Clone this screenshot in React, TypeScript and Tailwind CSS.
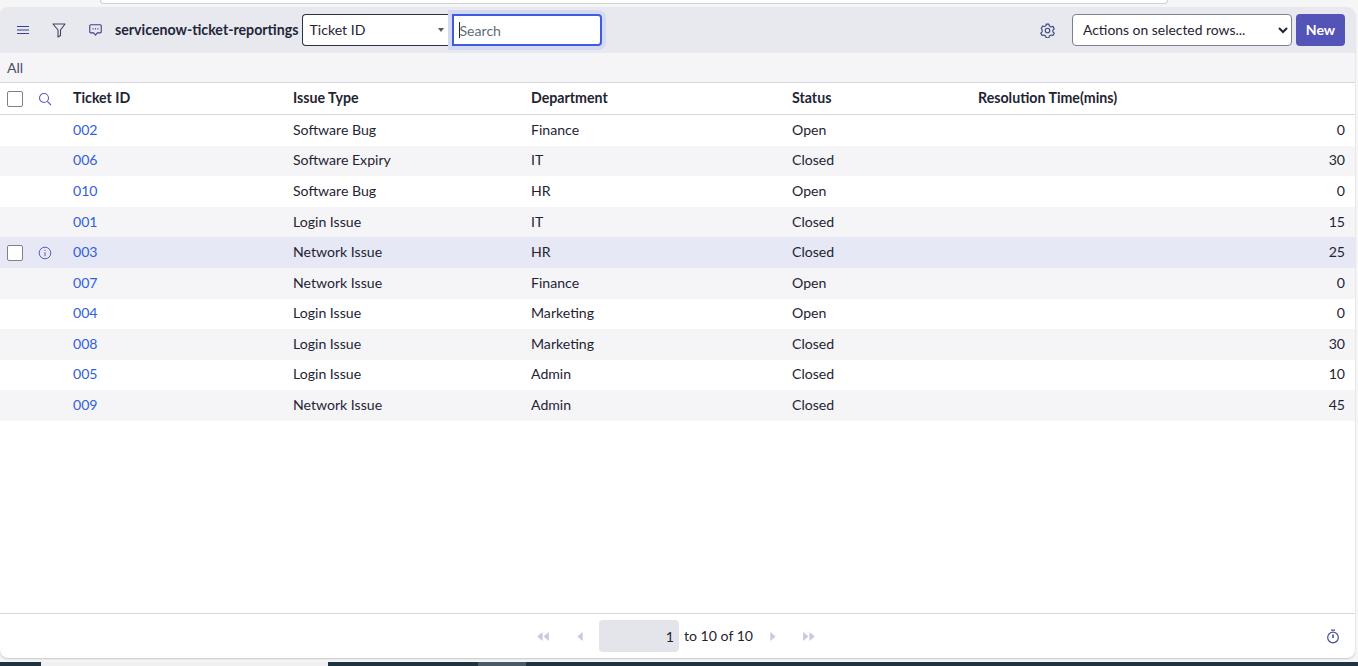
import React from "react";

const rows = [
  ["002", "Software Bug", "Finance", "Open", "0"],
  ["006", "Software Expiry", "IT", "Closed", "30"],
  ["010", "Software Bug", "HR", "Open", "0"],
  ["001", "Login Issue", "IT", "Closed", "15"],
  ["003", "Network Issue", "HR", "Closed", "25"],
  ["007", "Network Issue", "Finance", "Open", "0"],
  ["004", "Login Issue", "Marketing", "Open", "0"],
  ["008", "Login Issue", "Marketing", "Closed", "30"],
  ["005", "Login Issue", "Admin", "Closed", "10"],
  ["009", "Network Issue", "Admin", "Closed", "45"],
];

const MenuIcon = () => (
  <svg width="12" height="10" viewBox="0 0 12 10" fill="none" stroke="#3b3f8f" strokeWidth="1.1">
    <path d="M0 1.500h12M0 5h12M0 8.500h12" />
  </svg>
);

const FilterIcon = () => (
  <svg width="14" height="15" viewBox="0 0 14 15" fill="none" stroke="#3f4560" strokeWidth="1.1" strokeLinejoin="round">
    <path d="M1 1h12L8.500 7v5.500L6 14V7z" />
  </svg>
);

const ChatIcon = () => (
  <svg width="13" height="12" viewBox="0 0 14 13" fill="none" stroke="#3b3f8f" strokeWidth="1.200" strokeLinejoin="round">
    <path d="M2 .8h10a1.200 1.200 0 0 1 1.200 1.200v6.400A1.200 1.200 0 0 1 12 9.600H9l-2 2.500-2-2.500H2A1.200 1.200 0 0 1 .8 8.400V2A1.200 1.200 0 0 1 2 .8z" />
    <path d="M3.800 5.200h1.200M6.400 5.200h1.200M9 5.200h1.200" strokeWidth="1.400" />
  </svg>
);

const GearIcon = () => (
  <svg width="15" height="15" viewBox="0 0 16 16" fill="none" stroke="#3f4580" strokeWidth="1.200" strokeLinejoin="round">
    <path d="M6.500 1.200h3l.5 2 1.800 1 2-.6 1.400 2.600-1.500 1.400v1.800l1.500 1.400-1.400 2.600-2-.6-1.800 1-.5 2h-3l-.5-2-1.800-1-2 .6-1.400-2.600 1.500-1.400V7.200L1.300 5.800l1.400-2.600 2 .6 1.800-1z" />
    <circle cx="8" cy="8" r="2.400" />
  </svg>
);

const SearchIcon = () => (
  <svg width="14" height="14" viewBox="0 0 14 14" fill="none" stroke="#5a5fc0" strokeWidth="1.1">
    <circle cx="6" cy="6" r="4.500" />
    <path d="M9.300 9.300L13 13" />
  </svg>
);

const InfoIcon = () => (
  <svg width="14" height="14" viewBox="0 0 14 14" fill="none" stroke="#5a5fc0" strokeWidth="1">
    <circle cx="7" cy="7" r="5.800" />
    <path d="M7 6.200v4M7 3.800v1.100" />
  </svg>
);

const StopwatchIcon = () => (
  <svg width="14" height="15" viewBox="0 0 14 15" fill="none" stroke="#4a4f9c" strokeWidth="1.200">
    <circle cx="7" cy="8.500" r="5.300" />
    <path d="M5 1.200h4" />
    <path d="M7 5.500v3.500" strokeWidth="1.600" />
  </svg>
);

const DoubleArrow = ({ left }: { left?: boolean }) => (
  <svg width="12" height="9" viewBox="0 0 13 10" fill="#c9c9e0">
    {left ? <path d="M6 0v10L0 5zM13 0v10L7 5z" /> : <path d="M0 0v10l6-5zM7 0v10l6-5z" />}
  </svg>
);

const SingleArrow = ({ left }: { left?: boolean }) => (
  <svg width="6" height="9" viewBox="0 0 6 10" fill="#c9c9e0">
    {left ? <path d="M6 0v10L0 5z" /> : <path d="M0 0v10l6-5z" />}
  </svg>
);

const Checkbox = () => (
  <span className="block w-4 h-4 rounded-[2px] border border-[#7d8090] bg-white" />
);

const columns = "grid grid-cols-[30px_43px_220px_238px_261px_186px_1fr] items-center pr-[10px]";

export default function App() {
  return (
    <div className="h-[666px] w-[1358px] overflow-hidden flex flex-col bg-[#f6f6f6] text-[14.1px] text-[#1f2433] font-['Lato','Noto_Sans',sans-serif]">
      <div className="h-[7px] shrink-0 pl-[100px] pr-[190px]">
        <div className="h-[4px] bg-white border-b border-x border-[#d0d0d0] rounded-b-[8px]" />
      </div>

      <div className="flex-1 min-h-0 mr-[3px] bg-white rounded-[8px] flex flex-col overflow-hidden shadow-[0_1px_2px_rgba(0,0,0,0.2)]">
        <div className="h-[46px] shrink-0 bg-[#e8e9ee] flex items-center">
          <div className="w-[46px] flex justify-center"><MenuIcon /></div>
          <div className="w-[26px] flex justify-center"><FilterIcon /></div>
          <div className="w-[36px] pl-[10px] flex justify-center"><ChatIcon /></div>
          <span className="ml-[7px] pb-[1px] font-bold text-[14.2px] text-[#22263a] whitespace-nowrap">servicenow-ticket-reportings</span>
          <div className="ml-[4px] h-[32px] w-[150px] bg-white border border-[#2e3140] border-r-0 rounded-l-[4px] flex items-center justify-between pl-[6px] pr-[8px]">
            <span className="pb-[1px]">Ticket ID</span>
            <span className="w-0 h-0 border-x-[3px] border-x-transparent border-t-[4px] border-t-[#555a6a]" />
          </div>
          <div className="relative h-[32px] w-[150px] bg-white border-2 border-[#3f5ce0] rounded-r-[4px] flex items-center pl-[5px] text-[#5f6b7a] shadow-[0_0_0_4px_#d5daf2]">
            <span className="w-px h-[16px] -mr-px bg-[#1f2433]" />
            <span className="pt-[1px]">Search</span>
          </div>
          <div className="ml-auto flex items-center">
            <GearIcon />
            <select className="ml-[17px] h-[32px] w-[220px] bg-white border border-[#7d8090] rounded-[4px] pl-[6px] pb-[2px] text-[13.9px]">
              <option>Actions on selected rows...</option>
            </select>
            <button className="ml-[4px] mr-[10px] h-[32px] w-[49px] bg-[#5454b8] text-white font-bold rounded-[4px]">New</button>
          </div>
        </div>

        <div className="h-[30px] shrink-0 bg-[#f5f5f8] border-b border-[#d5d6de] flex items-center pl-[7px] text-[#4a4f68]">All</div>

        <div className={`${columns} h-[32px] shrink-0 border-b border-[#d5d6de] font-bold text-[14.2px]`}>
          <div className="pl-[7px]"><Checkbox /></div>
          <div className="pl-[8px]"><SearchIcon /></div>
          <div className="pb-[2px]">Ticket ID</div>
          <div className="pb-[2px]">Issue Type</div>
          <div className="pb-[2px]">Department</div>
          <div className="pb-[2px]">Status</div>
          <div className="pb-[2px]">Resolution Time(mins)</div>
        </div>

        <div className="flex-1 min-h-0">
          {rows.map((row, i) => {
            const hovered = row[0] === "003";
            const bg = hovered ? "bg-[#e6e8f5]" : i % 2 === 1 ? "bg-[#f5f5f8]" : "bg-white";
            return (
              <div key={row[0]} className={`${columns} h-[30.6px] ${bg}`}>
                <div className="pl-[7px]">{hovered && <Checkbox />}</div>
                <div className="pl-[8px]">{hovered && <InfoIcon />}</div>
                <div className="text-[#3060dc] pb-[2px]">{row[0]}</div>
                <div className="pb-[2px]">{row[1]}</div>
                <div className="pb-[2px]">{row[2]}</div>
                <div className="pb-[2px]">{row[3]}</div>
                <div className="text-right pb-[2px]">{row[4]}</div>
              </div>
            );
          })}
        </div>

        <div className="h-[45px] shrink-0 border-t border-[#d5d6de] flex items-center pl-[537px] pr-[15px]">
          <DoubleArrow left />
          <div className="ml-[28px]"><SingleArrow left /></div>
          <div className="ml-[16px] w-[80px] h-[32px] bg-[#e4e5ea] rounded-[4px] flex items-end justify-end pr-[5px] pb-[5px]">1</div>
          <span className="ml-[5px] pb-[1px]">to 10 of 10</span>
          <div className="ml-[17px]"><SingleArrow /></div>
          <div className="ml-[27px]"><DoubleArrow /></div>
          <div className="ml-auto"><StopwatchIcon /></div>
        </div>
      </div>

      <div className="h-[4px] mt-[4px] shrink-0 flex bg-[#1f3340]">
        <div className="ml-[41px] w-[287px] bg-[#f0f0f0]" />
        <div className="ml-[150px] w-[48px] bg-[#4a5a66]" />
      </div>
    </div>
  );
}
